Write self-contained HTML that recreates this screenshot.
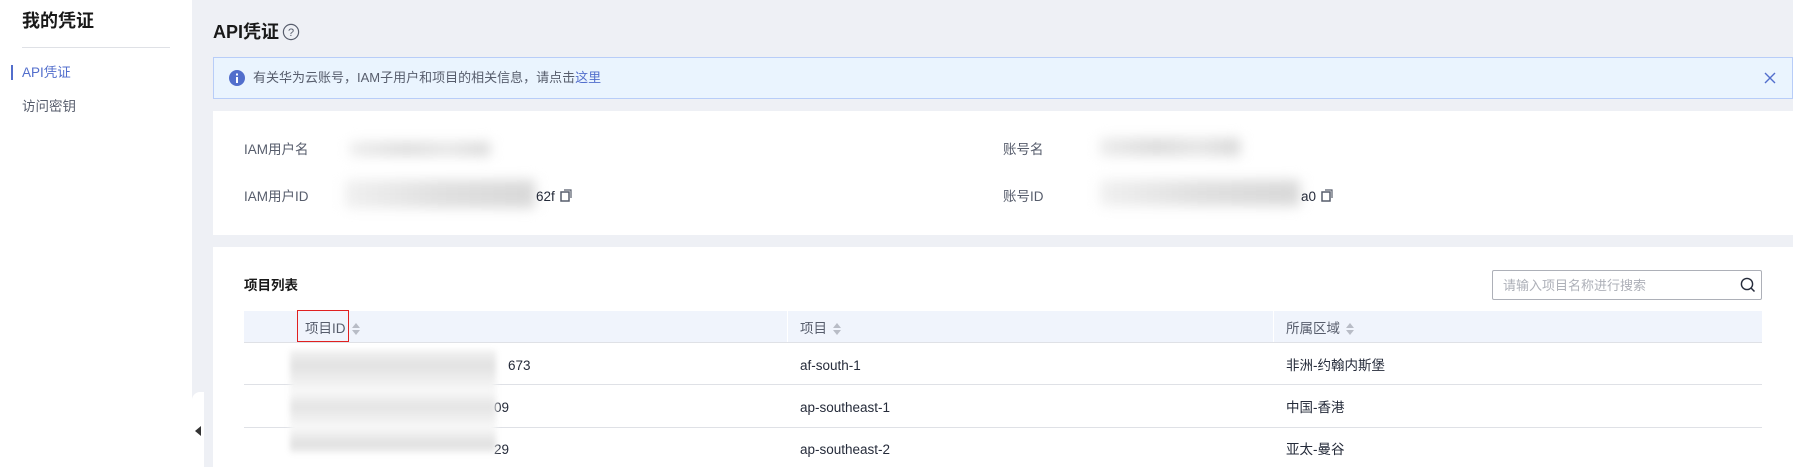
<!DOCTYPE html>
<html><head><meta charset="utf-8"><style>
*{margin:0;padding:0;box-sizing:border-box}
body{width:1793px;height:467px;overflow:hidden;background:#eef0f5;font-family:"Liberation Sans","Noto Sans CJK SC",sans-serif;color:#252b3a;position:relative;font-size:13.5px;line-height:18px}
.a{position:absolute;white-space:nowrap;line-height:18px}
.side{position:absolute;left:0;top:0;width:192px;height:467px;background:#fff}
.card{position:absolute;left:213px;right:0;background:#fff}
.blur{position:absolute;filter:blur(6px);background:linear-gradient(90deg,#ececec,#dcdcdc 40%,#e6e6e6 70%,#d8d8d8)}
.sort{display:inline-block;vertical-align:middle;margin-left:6px;width:8px;height:12px;position:relative}
.sort:before{content:"";position:absolute;left:0;top:0;border:4px solid transparent;border-bottom:5px solid #b8bcc6;border-top:0}
.sort:after{content:"";position:absolute;left:0;top:7px;border:4px solid transparent;border-top:5px solid #b8bcc6;border-bottom:0}
.hl{position:absolute;left:244px;right:31px;height:1px;background:#dfe1e6}
</style></head><body>
<div class="side">
 <div class="a" style="left:22px;top:10px;font-size:18px;line-height:22px;font-weight:bold;color:#191919">我的凭证</div>
 <div class="a" style="left:22px;top:47px;width:148px;height:1px;background:#dfe1e6"></div>
 <div class="a" style="left:11px;top:65px;width:2px;height:15px;background:#526ecc"></div>
 <div class="a" style="left:22px;top:64px;color:#526ecc">API凭证</div>
 <div class="a" style="left:22px;top:98px;color:#575d6c">访问密钥</div>
</div>
<div class="a" style="left:192px;top:392px;width:12px;height:75px;background:#fff;border-radius:8px 0 0 0"></div>
<div class="a" style="left:195px;top:426px;border:5px solid transparent;border-right:6px solid #333;border-left:0"></div>

<div class="a" style="left:213px;top:21px;font-size:18px;line-height:22px;font-weight:bold;color:#191919">API凭证</div>
<svg class="a" style="left:282px;top:23px" width="18" height="18" viewBox="0 0 18 18"><circle cx="9" cy="9" r="7.6" fill="none" stroke="#575d6c" stroke-width="1.2"/><text x="9" y="13" font-size="11" text-anchor="middle" fill="#575d6c" font-family="Liberation Sans">?</text></svg>

<div class="a" style="left:213px;top:57px;right:0;height:42px;background:#eaf4fe;border:1px solid #b8cdf8"></div>
<svg class="a" style="left:229px;top:70px" width="16" height="16"><circle cx="8" cy="8" r="8" fill="#526ecc"/><rect x="7" y="7" width="2" height="6" fill="#fff"/><rect x="7" y="3.5" width="2" height="2" fill="#fff"/></svg>
<div class="a" style="left:253px;top:69px;color:#575d6c;font-size:13px">有关华为云账号，IAM子用户和项目的相关信息，请点击<span style="color:#526ecc">这里</span></div>
<svg class="a" style="left:1764px;top:72px" width="12" height="12"><path d="M1 1L11 11M11 1L1 11" stroke="#526ecc" stroke-width="1.4"/></svg>

<div class="card" style="top:111px;height:124px"></div>
<div class="a" style="left:244px;top:141px;color:#575d6c">IAM用户名</div>
<div class="blur" style="left:350px;top:142px;width:140px;height:14px"></div>
<div class="a" style="left:244px;top:188px;color:#575d6c">IAM用户ID</div>
<div class="blur" style="left:345px;top:180px;width:190px;height:28px;background:linear-gradient(90deg,#f0f0f0,#e0e0e0 50%,#d8d8d8)"></div>
<div class="a" style="left:536px;top:188px">62f</div>
<svg class="a" style="left:560px;top:189px" width="12" height="13"><rect x="1" y="3" width="8" height="9" fill="none" stroke="#575d6c" stroke-width="1.5"/><path d="M4 1H11V9" fill="none" stroke="#575d6c" stroke-width="1.2"/></svg>
<div class="a" style="left:1003px;top:141px;color:#575d6c">账号名</div>
<div class="blur" style="left:1100px;top:138px;width:140px;height:18px"></div>
<div class="a" style="left:1003px;top:188px;color:#575d6c">账号ID</div>
<div class="blur" style="left:1100px;top:180px;width:200px;height:26px;background:linear-gradient(90deg,#f0f0f0,#e0e0e0 50%,#d8d8d8)"></div>
<div class="a" style="left:1301px;top:188px">a0</div>
<svg class="a" style="left:1321px;top:189px" width="12" height="13"><rect x="1" y="3" width="8" height="9" fill="none" stroke="#575d6c" stroke-width="1.5"/><path d="M4 1H11V9" fill="none" stroke="#575d6c" stroke-width="1.2"/></svg>

<div class="card" style="top:247px;bottom:0"></div>
<div class="a" style="left:244px;top:277px;font-weight:bold;color:#191919">项目列表</div>
<div class="a" style="left:1492px;top:270px;width:270px;height:30px;border:1px solid #adb0b8;border-radius:2px"></div>
<div class="a" style="left:1503px;top:277px;color:#adb0b8;font-size:13px">请输入项目名称进行搜索</div>
<svg class="a" style="left:1740px;top:277px" width="16" height="16"><circle cx="7" cy="7" r="5.6" fill="none" stroke="#252b3a" stroke-width="1.4"/><path d="M11 11L14.5 14.5" stroke="#252b3a" stroke-width="1.5"/></svg>

<div class="a" style="left:244px;top:311px;width:1518px;height:31px;background:#f0f4fc"></div>
<div class="a" style="left:787px;top:311px;width:1px;height:31px;background:#fff"></div>
<div class="a" style="left:1273px;top:311px;width:1px;height:31px;background:#fff"></div>
<div class="hl" style="top:342px"></div>
<div class="a" style="left:297px;top:310px;width:52px;height:32px;border:1.5px solid #e02020"></div>
<div class="a" style="left:305px;top:320px;color:#575d6c">项目ID<span class="sort"></span></div>
<div class="a" style="left:800px;top:320px;color:#575d6c">项目<span class="sort"></span></div>
<div class="a" style="left:1286px;top:320px;color:#575d6c">所属区域<span class="sort"></span></div>

<div class="a" style="left:508px;top:357px">673</div>
<div class="a" style="left:800px;top:357px">af-south-1</div>
<div class="a" style="left:1286px;top:357px">非洲-约翰内斯堡</div>
<div class="hl" style="top:384px"></div>
<div class="a" style="left:494px;top:399px">09</div>
<div class="a" style="left:800px;top:399px">ap-southeast-1</div>
<div class="a" style="left:1286px;top:399px">中国-香港</div>
<div class="hl" style="top:427px"></div>
<div class="a" style="left:494px;top:441px">29</div>
<div class="a" style="left:800px;top:441px">ap-southeast-2</div>
<div class="a" style="left:1286px;top:441px">亚太-曼谷</div>
<div class="a" style="left:290px;top:350px;width:206px;height:103px;background:linear-gradient(180deg,#f2f2f2,#e2e2e2 15%,#f8f8f8 40%,#e4e4e4 55%,#f8f8f8 75%,#e0e0e0 92%,#f2f2f2);filter:blur(3px)"></div>
</body></html>
